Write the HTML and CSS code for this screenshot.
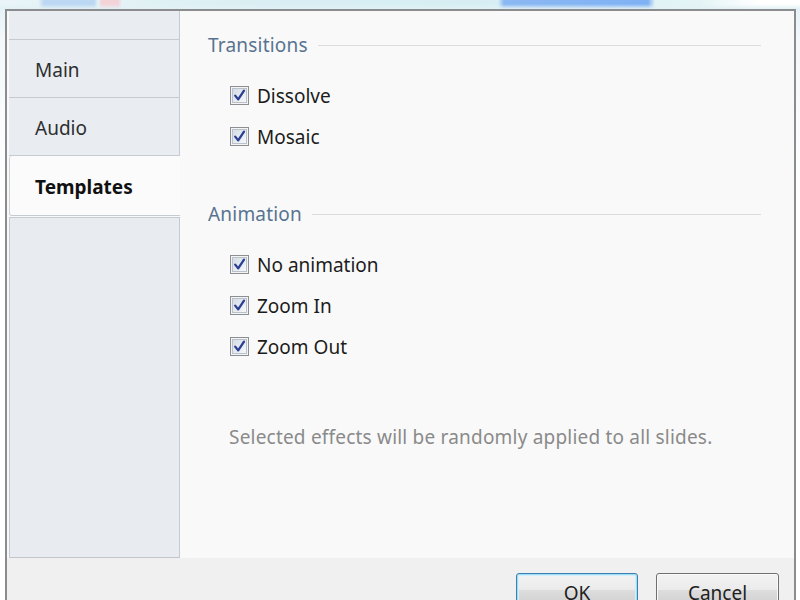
FILE: index.html
```html
<!DOCTYPE html>
<html>
<head>
<meta charset="utf-8">
<link rel="stylesheet" href="styles.css">
</head>
<body>
<div class="desk"></div>
<div class="dialog">
  <div class="main">
    <div class="sidebar">
      <div class="tab tab-blank"></div>
      <div class="tab">Main</div>
      <div class="tab">Audio</div>
      <div class="tab tab-active">Templates</div>
      <div class="side-panel"></div>
    </div>
    <div class="content">
      <div class="group-head"><span>Transitions</span></div>
      <ul class="checks">
        <li><svg class="cb" viewBox="0 0 19 19"><defs><linearGradient id="g1" x1="0" y1="0" x2="1" y2="1"><stop offset="0" stop-color="#d3dbe5"/><stop offset="1" stop-color="#f7f9fb"/></linearGradient></defs><rect x="0.5" y="0.5" width="18" height="18" fill="#f4f4f4" stroke="#8b8e92"/><rect x="2.5" y="2.5" width="14" height="14" fill="url(#g1)" stroke="#b9c1cb"/><path d="M5.2 9.6 L8.2 13.4 L14 4.6" fill="none" stroke="#2b3f92" stroke-width="2.3" stroke-linejoin="round" stroke-linecap="round"/></svg><span>Dissolve</span></li>
        <li><svg class="cb" viewBox="0 0 19 19"><rect x="0.5" y="0.5" width="18" height="18" fill="#f4f4f4" stroke="#8b8e92"/><rect x="2.5" y="2.5" width="14" height="14" fill="url(#g1)" stroke="#b9c1cb"/><path d="M5.2 9.6 L8.2 13.4 L14 4.6" fill="none" stroke="#2b3f92" stroke-width="2.3" stroke-linejoin="round" stroke-linecap="round"/></svg><span>Mosaic</span></li>
      </ul>
      <div class="group-head group-second"><span>Animation</span></div>
      <ul class="checks">
        <li><svg class="cb" viewBox="0 0 19 19"><rect x="0.5" y="0.5" width="18" height="18" fill="#f4f4f4" stroke="#8b8e92"/><rect x="2.5" y="2.5" width="14" height="14" fill="url(#g1)" stroke="#b9c1cb"/><path d="M5.2 9.6 L8.2 13.4 L14 4.6" fill="none" stroke="#2b3f92" stroke-width="2.3" stroke-linejoin="round" stroke-linecap="round"/></svg><span>No animation</span></li>
        <li><svg class="cb" viewBox="0 0 19 19"><rect x="0.5" y="0.5" width="18" height="18" fill="#f4f4f4" stroke="#8b8e92"/><rect x="2.5" y="2.5" width="14" height="14" fill="url(#g1)" stroke="#b9c1cb"/><path d="M5.2 9.6 L8.2 13.4 L14 4.6" fill="none" stroke="#2b3f92" stroke-width="2.3" stroke-linejoin="round" stroke-linecap="round"/></svg><span>Zoom In</span></li>
        <li><svg class="cb" viewBox="0 0 19 19"><rect x="0.5" y="0.5" width="18" height="18" fill="#f4f4f4" stroke="#8b8e92"/><rect x="2.5" y="2.5" width="14" height="14" fill="url(#g1)" stroke="#b9c1cb"/><path d="M5.2 9.6 L8.2 13.4 L14 4.6" fill="none" stroke="#2b3f92" stroke-width="2.3" stroke-linejoin="round" stroke-linecap="round"/></svg><span>Zoom Out</span></li>
      </ul>
      <p class="note">Selected effects will be randomly applied to all slides.</p>
    </div>
  </div>
  <div class="footer">
    <button class="btn btn-default">OK</button>
    <button class="btn">Cancel</button>
  </div>
</div>
</body>
</html>
```
FILE: styles.css
```css
html, body {
  margin: 0;
  padding: 0;
  height: 600px;
  overflow: hidden;
}
body {
  background: linear-gradient(to bottom, #e2f1f5 0, #f4f8fa 40px, #ffffff 200px);
  font-family: "Noto Sans", "Open Sans", sans-serif;
}
.desk {
  height: 9px;
  background:
    linear-gradient(to bottom, rgba(255,255,255,0) 0, rgba(255,255,255,0) 4px, #e2f1f5 9px),
    linear-gradient(to right, transparent 498px, #8ab8f2 504px, #7fb1f3 648px, transparent 655px),
    linear-gradient(to right, transparent 38px, #bcd7f2 44px, #bcd7f2 94px, transparent 98px, #f3d3d8 102px, #f3d3d8 118px, transparent 122px),
    linear-gradient(to right, #e9f5f8 0, #d8eef2 300px, #d6eef3 480px, #e4f4f6 700px, #ffffff 760px, #ffffff 800px);
}
.dialog {
  margin-left: 5px;
  width: 787px;
  height: 591px;
  border: 2px solid #8a8c8e;
  border-bottom: none;
  display: flex;
  flex-direction: column;
  background: #f0f0f0;
  overflow: hidden;
}
.main {
  height: 547px;
  flex: none;
  display: flex;
}
.sidebar {
  width: 171px;
  padding-left: 2px;
  background: #f9f9f9;
  display: flex;
  flex-direction: column;
}
.tab {
  height: 58px;
  box-sizing: border-box;
  padding-left: 26px;
  padding-top: 2px;
  display: flex;
  align-items: center;
  font-size: 19px;
  color: #2e2e2e;
  background: #e9edf1;
  border-bottom: 1px solid #c6cbd1;
  border-right: 1px solid #c6cbd1;
}
.tab-blank {
  height: 29px;
}
.tab-active {
  height: 60px;
  background: #fbfbfb;
  font-weight: bold;
  color: #111;
  border-right: none;
  border-left: 1px solid #cfd3d8;
  border-radius: 3px 0 0 3px;
  padding-left: 25px;
}
.side-panel {
  flex: 1;
  margin-top: 1px;
  background: #e8ecf1;
  border: 1px solid #c6cbd1;
  border-bottom-color: #c2c6cb;
}
.content {
  flex: 1;
  background: #f9f9f9;
  padding: 22px 33px 0 28px;
}
.group-head {
  height: 24px;
  display: flex;
  align-items: center;
  gap: 10px;
  font-size: 19px;
  color: #587391;
}
.group-head span {
  letter-spacing: 0.2px;
}
.group-head::after {
  content: "";
  flex: 1;
  height: 1px;
  background: #dcdde0;
}
.group-second {
  margin-top: 45px;
}
.checks {
  list-style: none;
  margin: 18px 0 0 22px;
  padding: 0;
}
.checks li {
  height: 41px;
  display: flex;
  align-items: center;
  gap: 8px;
  font-size: 19px;
  color: #1c1c1c;
}
.cb {
  width: 19px;
  height: 19px;
  flex: none;
}
.note {
  margin: 58px 0 0 21px;
  line-height: 24px;
  font-size: 19px;
  letter-spacing: 0.2px;
  color: #8a8a8a;
}
.footer {
  flex: none;
  display: flex;
  justify-content: flex-end;
  gap: 18px;
  padding: 15px 15px 0 0;
  background: #f0f0f0;
  height: 29px;
}
.btn {
  flex: none;
  width: 123px;
  height: 34px;
  border: 1px solid #707070;
  border-radius: 3px;
  background: linear-gradient(to bottom, #f3f3f3 0, #ebebeb 50%, #dddddd 50%, #cfcfcf 100%);
  box-shadow: inset 0 0 0 1px #fafafa;
  font-family: "Noto Sans", "Open Sans", sans-serif;
  font-size: 19px;
  color: #1e1e1e;
  padding: 4px 0 0;
  line-height: 30px;
}
.btn-default {
  width: 122px;
  border-color: #3c7fb1;
  box-shadow: inset 0 0 0 1px #9fdcf6, inset 0 0 0 2px #d4eefb;
}
```
